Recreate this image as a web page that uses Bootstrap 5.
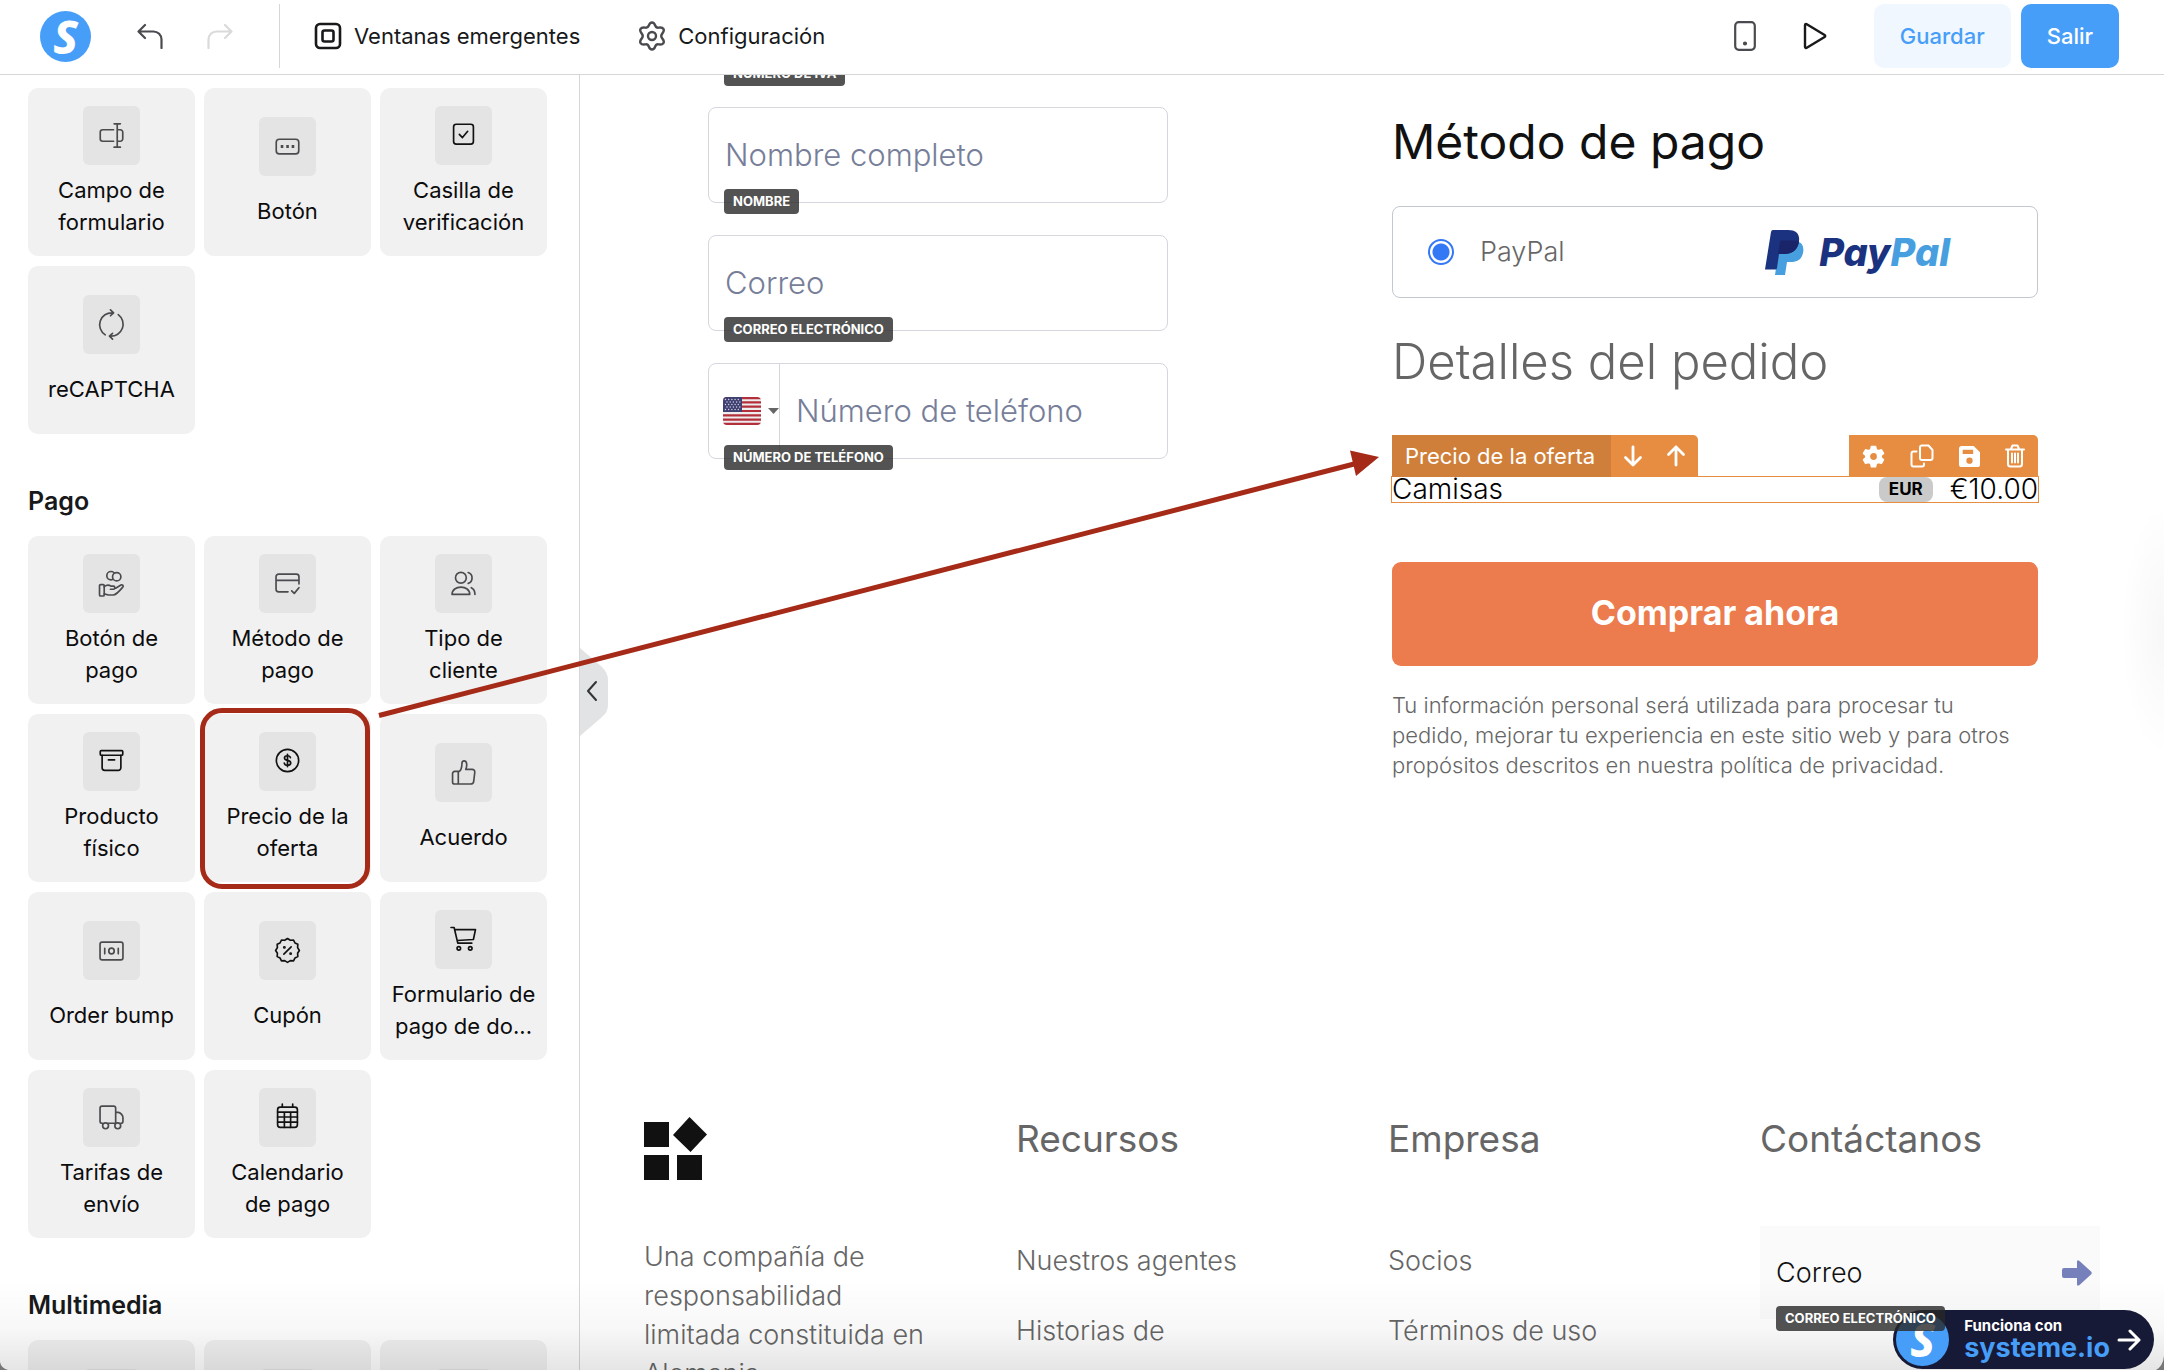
<!DOCTYPE html>
<html lang="es">
<head>
<meta charset="utf-8">
<meta name="viewport" content="width=device-width, initial-scale=1">
<title>Editor de páginas</title>
<link rel="stylesheet" href="https://cdn.jsdelivr.net/npm/bootstrap@5.3.0/dist/css/bootstrap.min.css">
<style>
body{font-family:Inter,"Liberation Sans",sans-serif;font-size:22px;line-height:32px;color:#18191b;background:#fff;height:100vh;overflow:hidden}
svg{display:block;fill:none;stroke:currentColor;stroke-linecap:round;stroke-linejoin:round;flex:none}
svg.solid{stroke:none}
button{font-family:inherit}
/* top bar */
.topbar{height:75px;border-bottom:1px solid #d5d6d8;padding:0 45px 2px 40px;font-weight:500;flex:none}
.topbar button{color:#18191b}
.plain{background:none;border:0;padding:0}
.s-logo{width:51px;height:51px;border-radius:50%;background:#479ef8;color:#fff;font:italic 800 46px/50px "Noto Sans",sans-serif;text-align:center;text-decoration:none;flex:none}
.bar-rule{width:1px;height:64px;background:#d5d6d8}
.undo-set{gap:44px;margin:0 46px}
.topbar .undo-set button{color:#4a4b4f}
.topbar .undo-set button:disabled{color:#d9dadb}
.bar-menu{gap:58px;margin-left:34px}
.bar-menu button{gap:12px}
.bar-tools{gap:47px;margin-right:47px}
.topbar .btn{height:64px;border-radius:10px;font-size:22px;font-weight:500;padding:0 26px;border:0}
.topbar .btn-save{background:#f0f7ff;color:#479ef8;margin-right:10px}
.topbar .btn-exit{background:#479ef8;color:#fff}
/* element palette */
.palette{width:580px;border-right:1px solid #d5d6d8;padding:13px 32px 0 28px;flex:none;overflow:hidden}
.palette h2{font-size:25px;line-height:32px;font-weight:600;margin:51px 0 19px}
.tiles{display:grid;grid-template-columns:repeat(3,1fr);gap:10px 9px}
.tile{height:168px;border:0;border-radius:10px;background:#f1f1f1;padding:9px 4px;display:flex;flex-direction:column;align-items:center;justify-content:space-evenly;color:#0c0c0d;position:relative}
.tile-ico{width:57px;height:59px;border-radius:6px;background:#e4e4e4;display:flex;align-items:center;justify-content:center;color:#4a4b4f}
.tile-ico.ink{color:#111}
.tile-ico svg{width:25px;height:25px;stroke-width:1.6;overflow:visible}
.picked::after{content:"";position:absolute;inset:-6px 1px -7px -4px;border:5px solid #a52b18;border-radius:22px;pointer-events:none}
/* canvas */
.canvas{overflow:hidden;position:relative}
.checkout{display:grid;grid-template-columns:460fr 646fr;column-gap:224px;padding:0 126px 0 128px}
.fields{margin-top:-96px;display:flex;flex-direction:column;gap:32px}
.field{position:relative;height:96px;border:1px solid #d5d6de;border-radius:8px;display:flex}
.field input,.mail input{border:0;background:none;width:100%;min-width:0;padding:0 16px;font-size:31px;font-weight:300;outline:0;color:#777e99}
.field input::placeholder{color:#777e99;opacity:1}
.tag{position:absolute;left:15px;bottom:-12px;z-index:3;height:25px;line-height:25px;padding:0 9px;border-radius:4px;background:rgba(40,40,40,.8);color:#fff;font-size:13px;font-weight:700;white-space:nowrap;text-transform:uppercase}
.dial{background:none;border:0;border-right:1px solid #d5d6de;width:71px;flex:none;padding:0 0 0 14px;gap:7px}
.pay-col{padding-top:37px}
.pay-col h1{font-size:48px;line-height:60px;font-weight:400;color:#111;margin:0 0 34px}
.pay-col h2{font-size:49px;line-height:60px;font-weight:300;color:#666;margin:34px 0 84px}
.method{height:92px;border:1px solid #c3c7d0;border-radius:8px;padding:0 87px 0 35px;font-size:27px;font-weight:300;color:#666}
.method .form-check-input{width:26px;height:26px;margin:0 26px 0 0;border:2px solid #3478f6;background:radial-gradient(circle,#3478f6 0 8px,#fff 9px);flex:none;float:none}
.method svg{margin-right:15px}
.brand{font-size:38px;font-weight:800;font-style:italic;line-height:44px;color:#1a3280}
.brand span{color:#479fe0}
.offer{position:relative;height:27px;border:1px solid #e68d41;margin:0 -1px;font-size:28px;line-height:25px;font-weight:300;color:#000}
.offer-tools{position:absolute;left:0;right:0;bottom:100%;height:42px;color:#fff;font-size:22px;font-weight:400}
.offer-tools>div{background:#e68d41;border-top-right-radius:5px}
.offer-tools button{color:#fff}
.offer-name{background:#d07f3a;padding:0 16px 0 13px;line-height:42px}
.offer-move{gap:23px;padding:0 12px}
.offer-acts{gap:25px;padding:0 13px}
.cur{background:#cacaca;border-radius:8px;color:#000;font-size:17px;font-weight:700;height:25px;padding:0 10px;margin-right:17px}
.cta{height:104px;width:100%;border:0;border-radius:9px;background:#ec7b4d;color:#fff;font-size:34px;font-weight:700;margin:59px 0 24px;padding:0 0 2px}
.legal{font-size:22px;line-height:30px;font-weight:300;color:#666;margin:0}
.site-foot{display:grid;grid-template-columns:repeat(4,1fr);gap:32px;padding:0 64px;margin-top:337px;color:#666;font-size:27px;font-weight:300}
.site-foot h3{font-size:37px;line-height:44px;font-weight:400;margin:0}
.site-foot p{line-height:39px;margin:56px 40px 0 0}
.foot-links{list-style:none;padding:0;margin:80px 0 0;display:grid;gap:30px;line-height:40px}
.foot-links a{color:inherit;text-decoration:none}
.mail{position:relative;height:93px;background:#fafafa;margin-top:65px;padding-right:8px}
.mail input{font-size:27px}
.mail input::placeholder{color:#111;opacity:1}
.mail .tag{left:16px}
.powered{position:absolute;right:10px;bottom:1px;z-index:2;height:59px;border-radius:30px;background:#171a36;color:#fff;padding:0 13px 0 3px;gap:15px;text-decoration:none}
.powered .s-logo{width:53px;height:53px;line-height:52px}
.powered small{display:block;font-size:15px;line-height:16px;font-weight:700}
.powered b{display:block;font-size:27px;line-height:28px;color:#479ef8;font-weight:700}
.powered svg{margin-left:-8px}
.handle{position:absolute;left:580px;top:648px;z-index:2}
.guide{position:absolute;left:370px;top:440px;z-index:4;pointer-events:none}
.shade{position:absolute;left:0;right:0;bottom:0;height:90px;z-index:1;pointer-events:none;background:linear-gradient(rgba(0,0,0,0),rgba(0,0,0,.03) 55%,rgba(0,0,0,.1))}
.glow{position:absolute;right:0;top:500px;width:44px;height:260px;pointer-events:none;background:radial-gradient(ellipse at 100% 50%,rgba(0,0,0,.03),rgba(0,0,0,0) 70%)}
.corner{position:absolute;bottom:0;z-index:5;color:#777}
.corner-l{left:0}
.corner-r{right:0}
</style>
<script src="https://cdn.jsdelivr.net/npm/bootstrap@5.3.0/dist/js/bootstrap.bundle.min.js"></script>
</head>
<body class="d-flex flex-column position-relative">

<header class="topbar d-flex align-items-center">
  <a class="s-logo" href="#" aria-label="Inicio">S</a>
  <div class="undo-set d-flex">
    <button class="plain" aria-label="Deshacer"><svg width="26" height="26" viewBox="0 0 26 26" stroke-width="2.200"><path d="M8 2 1.500 8.500 8 15M2 8.500h14.500a8 8 0 0 1 8 8V25"/></svg></button>
    <button class="plain" aria-label="Rehacer" disabled><svg width="26" height="26" viewBox="0 0 26 26" stroke-width="2.200"><path d="M18 2l6.500 6.500L18 15M24 8.500H9.500a8 8 0 0 0-8 8V25"/></svg></button>
  </div>
  <div class="bar-rule"></div>
  <nav class="bar-menu d-flex">
    <button class="plain d-flex align-items-center"><svg width="28" height="28" viewBox="0 0 28 28" stroke-width="2.600"><rect x="2" y="2" width="24" height="24" rx="4"/><rect x="8.500" y="8.500" width="11" height="11" rx="2"/></svg>Ventanas emergentes</button>
    <button class="plain d-flex align-items-center"><svg width="28" height="30" viewBox="0 0 28 30" stroke-width="2.400" color="#4a4b4f"><path d="M14 1.500c2 0 2.600 1.300 3.200 3 .6 1.600 1.800 2.400 3.500 2.100 1.900-.3 3.600-.6 4.700 1.300s.2 3.100-1 4.500c-1.300 1.500-1.300 3.700 0 5.200 1.200 1.400 2.100 2.600 1 4.500s-2.800 1.600-4.700 1.300c-1.700-.3-2.900.5-3.500 2.100-.6 1.700-1.200 3-3.200 3s-2.600-1.300-3.200-3c-.6-1.600-1.800-2.400-3.500-2.100-1.900.3-3.600.6-4.700-1.300s-.2-3.100 1-4.500c1.300-1.500 1.300-3.700 0-5.200-1.200-1.400-2.100-2.600-1-4.500s2.800-1.600 4.700-1.300c1.700.3 2.900-.5 3.500-2.100.6-1.700 1.200-3 3.200-3Z"/><circle cx="14" cy="15" r="4"/></svg>Configuración</button>
  </nav>
  <div class="bar-tools d-flex align-items-center ms-auto">
    <button class="plain" aria-label="Vista móvil"><svg width="22" height="30" viewBox="0 0 22 30" stroke-width="2.200" color="#4a4b4f"><rect x="1.200" y="1.200" width="19.600" height="27.600" rx="3.500"/><circle cx="11" cy="22.500" r="1" fill="currentColor"/></svg></button>
    <button class="plain" aria-label="Vista previa"><svg width="24" height="28" viewBox="0 0 24 28" stroke-width="2.400"><path d="M2 3.200v21.600c0 1 1 1.500 1.800 1L21.600 15c.8-.5.8-1.500 0-2L3.800 2.200C3 1.700 2 2.200 2 3.200Z"/></svg></button>
  </div>
  <button class="btn btn-save">Guardar</button>
  <button class="btn btn-exit">Salir</button>
</header>

<div class="d-flex flex-grow-1 overflow-hidden">
  <aside class="palette">
    <div class="tiles">
      <button class="tile"><span class="tile-ico"><svg viewBox="0 0 24 24"><path d="M14 6.500H3.500A2.300 2.300 0 0 0 1.200 8.800v6.400a2.300 2.300 0 0 0 2.300 2.300H14M17.500 1v22M14.500.8h6M14.500 23.200h6M18.500 6.500h2a2.300 2.300 0 0 1 2.300 2.300v6.400a2.300 2.300 0 0 1-2.300 2.300h-2"/></svg></span><span>Campo de<br>formulario</span></button>
      <button class="tile"><span class="tile-ico"><svg viewBox="0 0 24 24"><rect x="1.200" y="5" width="21.600" height="14" rx="3"/><path d="M5.500 12h2.500M10.800 12h2.500M16 12h2.500" stroke-width="2.800" stroke-linecap="butt"/></svg></span><span>Botón</span></button>
      <button class="tile"><span class="tile-ico ink"><svg viewBox="0 0 24 24"><rect x="2.500" y="1.200" width="19" height="19" rx="2.500"/><path d="m8 11 3 3 5-6"/></svg></span><span>Casilla de<br>verificación</span></button>
      <button class="tile"><span class="tile-ico"><svg viewBox="0 0 24 24"><path d="M6 22A11.500 11.500 0 0 1 13 .8M18.500 2.500A11.500 11.500 0 0 1 11 23.200M11-2l3 2.800-3 2.800M13 26l-3-2.800 3-2.700"/></svg></span><span>reCAPTCHA</span></button>
    </div>

    <h2>Pago</h2>
    <div class="tiles">
      <button class="tile"><span class="tile-ico"><svg viewBox="0 0 24 24"><circle cx="11.500" cy="4.500" r="4"/><circle cx="17" cy="5.500" r="4" fill="#e4e4e4"/><rect x="0.500" y="13" width="4.500" height="11" rx="1"/><path d="M5 15c2.500-2 4.500-2 6.500-.5H14c1.500 0 1.500 3 0 3h-3M16 16.500l5-3c1.500-.7 3 .8 1.800 2C19.500 19.500 17 22.500 14 23H9l-4-1"/></svg></span><span>Botón de<br>pago</span></button>
      <button class="tile"><span class="tile-ico"><svg viewBox="0 0 24 24"><path d="M12.500 20H3.500a2.500 2.500 0 0 1-2.500-2.500v-12A2.500 2.500 0 0 1 3.500 3h17A2.500 2.500 0 0 1 23 5.500V12.500M1 9h22M16 19l2.500 2.500 4.500-5.500"/></svg></span><span>Método de<br>pago</span></button>
      <button class="tile"><span class="tile-ico"><svg viewBox="0 0 24 24"><circle cx="9.500" cy="6.500" r="5.200"/><path d="M1 22.500C1 18 5 15.500 9.500 15.500s8.500 2.500 8.500 7zM16.500 1.500a5.500 5.500 0 0 1 0 10.400M19.500 16c2.200 1 3.500 3.500 3.500 6.500"/></svg></span><span>Tipo de<br>cliente</span></button>
      <button class="tile"><span class="tile-ico ink"><svg viewBox="0 0 24 24"><rect x="1.200" y="1.500" width="21.600" height="4.500" rx="1"/><path d="M3 6v12A2.500 2.500 0 0 0 5.500 20.500h13A2.500 2.500 0 0 0 21 18V6M9 10.500h6"/></svg></span><span>Producto<br>físico</span></button>
      <button class="tile picked"><span class="tile-ico ink"><svg viewBox="0 0 24 24"><circle cx="12" cy="11" r="10.700"/><path d="M14.800 8.300c-.3-1.200-1.400-1.800-2.800-1.800-1.700 0-2.900.8-2.900 2.100 0 3.200 6 1.500 6 4.800 0 1.400-1.300 2.200-3 2.200-1.600 0-2.900-.7-3.200-2.100M12 5v12"/></svg></span><span>Precio de la<br>oferta</span></button>
      <button class="tile"><span class="tile-ico"><svg viewBox="0 0 24 24"><path d="M7 23V11.500c3-1.500 3.500-5 3.500-8 0-3.500 4-3.500 4.500 0 .3 2-.2 4-.8 5.500h6c2 0 2.800 1.300 2.600 3l-1 8.500c-.2 1.700-1.300 2.500-3 2.500zM7 23H3.500a2 2 0 0 1-2-2V13a2 2 0 0 1 2-2H7"/></svg></span><span>Acuerdo</span></button>
      <button class="tile"><span class="tile-ico"><svg viewBox="0 0 24 24"><rect x="1" y="4" width="22" height="17" rx="2"/><path d="M5.500 9.800v5.400M18.500 9.800v5.400"/><ellipse cx="12" cy="12.500" rx="2.600" ry="2.800"/></svg></span><span>Order bump</span></button>
      <button class="tile"><span class="tile-ico ink"><svg viewBox="0 0 24 24"><path d="M12 .5l2.700 1.700 3.100-.2 1.400 2.800 2.700 1.300-.2 3.100L23.400 12l-1.700 2.700.2 3.100-2.700 1.300-1.400 2.800-3.100-.2L12 23.400l-2.700-1.700-3.100.2-1.400-2.800-2.700-1.300.2-3.100L.6 12l1.700-2.800-.2-3.100 2.700-1.300L6.200 2l3.100.2zM8.500 15.500l7-7"/><circle cx="9" cy="9" r=".6"/><circle cx="15" cy="15" r=".6"/></svg></span><span>Cupón</span></button>
      <button class="tile"><span class="tile-ico ink"><svg viewBox="0 0 24 24"><path d="M0 .5h3L6.500 15.500H20M3.500 2.500H23.500l-2 9.500L6 13"/><circle cx="7.500" cy="20.500" r="1.700"/><circle cx="18.500" cy="20.500" r="1.700"/></svg></span><span>Formulario de<br>pago de do...</span></button>
      <button class="tile"><span class="tile-ico"><svg viewBox="0 0 24 24"><path d="M3.500 17.500H3a2 2 0 0 1-2-2V3a2 2 0 0 1 2-2h11a2 2 0 0 1 2 2v14.500H9M16 7h2.500c2 0 4.500 3 4.500 5v3.500a2 2 0 0 1-2 2M16 17.500h-.5"/><circle cx="6.300" cy="20" r="2.800"/><circle cx="18" cy="20" r="2.800"/></svg></span><span>Tarifas de<br>envío</span></button>
      <button class="tile"><span class="tile-ico ink"><svg viewBox="0 0 24 24"><rect x="2.500" y="2" width="19" height="19.500" rx="2.500"/><path d="M2.500 6.800h19M2.500 11.500h19M2.500 16.500h19M9 7v14.500M15 7v14.500M7-1v3M17-1v3"/></svg></span><span>Calendario<br>de pago</span></button>
    </div>

    <h2>Multimedia</h2>
    <div class="tiles">
      <button class="tile" aria-label="Imagen"><span class="tile-ico"></span><span>&nbsp;</span></button>
      <button class="tile" aria-label="Video"><span class="tile-ico"></span><span>&nbsp;</span></button>
      <button class="tile" aria-label="Audio"><span class="tile-ico"></span><span>&nbsp;</span></button>
    </div>
  </aside>

  <main class="canvas flex-grow-1">
    <div class="checkout">
      <form class="fields">
        <div class="field"><input type="text" id="f-iva" aria-label="Número de IVA"><label class="tag" for="f-iva">Número de IVA</label></div>
        <div class="field"><input type="text" id="f-name" placeholder="Nombre completo"><label class="tag" for="f-name">Nombre</label></div>
        <div class="field"><input type="email" id="f-mail" placeholder="Correo"><label class="tag" for="f-mail">Correo electrónico</label></div>
        <div class="field">
          <button type="button" class="dial d-flex align-items-center" aria-label="País">
            <svg class="solid" width="38" height="28" viewBox="0 0 38 28"><defs><clipPath id="fl"><rect width="38" height="28" rx="4"/></clipPath></defs><g clip-path="url(#fl)"><path fill="#eee" d="M0 0h38v28H0z"/><path stroke="#b22f3b" stroke-width="2.150" stroke-linecap="butt" d="M0 1.080h38M0 5.380h38M0 9.690h38M0 14h38M0 18.300h38M0 22.600h38M0 26.900h38"/><path fill="#414073" d="M0 0h19v15H0z"/><path stroke="#d5d5e2" stroke-width="1.400" stroke-dasharray="0 3.200" d="M2.500 2.500h15M4 5h13M2.500 7.500h15M4 10h13M2.500 12.500h15"/></g></svg>
            <svg class="solid" width="11" height="6" viewBox="0 0 11 6"><path fill="#666" d="M0 0h11L5.500 6z"/></svg>
          </button>
          <input type="tel" id="f-tel" placeholder="Número de teléfono"><label class="tag" for="f-tel">Número de teléfono</label>
        </div>
      </form>

      <section class="pay-col">
        <h1>Método de pago</h1>
        <div class="method d-flex align-items-center">
          <input class="form-check-input" type="radio" name="method" id="m-paypal" checked>
          <label for="m-paypal">PayPal</label>
          <svg class="solid ms-auto" width="39" height="45" viewBox="0 0 39 45"><path fill="#479fe0" d="M15 12h19c4 2 5 6 4 11-1.500 7-6 9-12 9h-4l-2 13H10z"/><path fill="#1a3280" d="M6 2q.3-2 2-2h15c8 0 12 4 11 11-1.500 9-7 13-15 13h-5l-2 14q-.3 1.500-1.500 1.500H0z"/><path fill="#1a2468" d="M15 12q.3-1.500 2-1.500h15.500l1.500 1c-1 8.500-7 12.500-15 12.500h-6z"/></svg>
          <div class="brand">Pay<span>Pal</span></div>
        </div>
        <h2>Detalles del pedido</h2>

        <div class="offer d-flex align-items-center">
          <div class="offer-tools d-flex justify-content-between">
            <div class="d-flex align-items-center">
              <span class="offer-name">Precio de la oferta</span>
              <span class="offer-move d-flex">
                <button class="plain" aria-label="Bajar"><svg width="20" height="22" viewBox="0 0 20 22" stroke-width="2.800"><path d="M10 2v18M2.500 12.500 10 20l7.500-7.500"/></svg></button>
                <button class="plain" aria-label="Subir"><svg width="20" height="22" viewBox="0 0 20 22" stroke-width="2.800"><path d="M10 20V2M2.500 9.500 10 2l7.500 7.500"/></svg></button>
              </span>
            </div>
            <div class="offer-acts d-flex align-items-center">
              <button class="plain" aria-label="Ajustes"><svg width="23" height="23" viewBox="0 0 24 24" stroke-width="1.500"><path fill="#fff" fill-rule="evenodd" d="M9.800 1.500h4.400l.7 3.300 2.200 1.200 3.200-1 2.200 3.800-2.500 2.200v2.200l2.500 2.200-2.200 3.800-3.200-1-2.200 1.200-.7 3.300H9.800l-.7-3.300-2.200-1.200-3.200 1-2.200-3.800L4 13.200V11L1.500 8.800 3.700 5l3.200 1 2.200-1.200zM12 7.700a4.300 4.300 0 1 0 0 8.600 4.300 4.300 0 0 0 0-8.600z"/></svg></button>
              <button class="plain" aria-label="Duplicar"><svg width="24" height="24" viewBox="0 0 24 24" stroke-width="2"><path d="M12 1.500h6.500L22.500 6v8a2 2 0 0 1-2 2H12a2 2 0 0 1-2-2V3.500a2 2 0 0 1 2-2ZM6.500 7.500H3.500a2 2 0 0 0-2 2v11a2 2 0 0 0 2 2H12a2 2 0 0 0 2-2v-1"/></svg></button>
              <button class="plain" aria-label="Guardar elemento"><svg class="solid" width="21" height="21" viewBox="0 0 20 20"><path fill="#fff" fill-rule="evenodd" d="M2.500 0H14l6 6v11.500a2.500 2.500 0 0 1-2.500 2.500h-15A2.500 2.500 0 0 1 0 17.500v-15A2.500 2.500 0 0 1 2.500 0ZM3.500 3.500v4h10v-4ZM10 11a3 3 0 1 0 0 6 3 3 0 0 0 0-6Z"/></svg></button>
              <button class="plain" aria-label="Eliminar"><svg width="20" height="24" viewBox="0 0 20 24" stroke-width="2"><path d="M1 5.500h18M3 5.500v14.500a2.500 2.500 0 0 0 2.500 2.500h9a2.500 2.500 0 0 0 2.500-2.500V5.500M6 5l1.500-3.500h5L14 5M7 9.500v9M10 9.500v9M13 9.500v9"/></svg></button>
            </div>
          </div>
          <span>Camisas</span>
          <span class="cur ms-auto">EUR</span>
          <span>€10.00</span>
        </div>

        <button class="cta">Comprar ahora</button>
        <p class="legal">Tu información personal será utilizada para procesar tu<br>pedido, mejorar tu experiencia en este sitio web y para otros<br>propósitos descritos en nuestra política de privacidad.</p>
      </section>
    </div>

    <footer class="site-foot">
      <div>
        <svg class="solid" width="64" height="64" viewBox="0 0 64 64"><path fill="#111" d="M0 5h25v25H0zM0 38h25v25H0zM33 38h25v25H33zM45.500 0 63 17.500 46.500 35 29 18z"/></svg>
        <p>Una compañía de responsabilidad limitada constituida en Alemania</p>
      </div>
      <div>
        <h3>Recursos</h3>
        <ul class="foot-links"><li><a href="#">Nuestros agentes</a></li><li><a href="#">Historias de</a></li></ul>
      </div>
      <div>
        <h3>Empresa</h3>
        <ul class="foot-links"><li><a href="#">Socios</a></li><li><a href="#">Términos de uso</a></li></ul>
      </div>
      <div>
        <h3>Contáctanos</h3>
        <form class="mail d-flex align-items-center">
          <input type="email" id="n-mail" placeholder="Correo"><label class="tag" for="n-mail">Correo electrónico</label>
          <button type="button" class="plain" aria-label="Enviar"><svg class="solid" width="30" height="26" viewBox="0 0 30 26"><path fill="#7681bb" d="M2 8h13V2q0-3 2.500-1L29 11.500q1.500 1.500 0 3L17.500 25q-2.500 2-2.500-1v-6H2q-2 0-2-2v-6q0-2 2-2z"/></svg></button>
        </form>
      </div>
    </footer>

    <a class="powered d-flex align-items-center" href="#">
      <span class="s-logo">S</span>
      <span><small>Funciona con</small><b>systeme.io</b></span>
      <svg width="24" height="24" viewBox="0 0 24 24" stroke-width="3"><path d="M2 12h20M13 3l9 9-9 9"/></svg>
    </a>
  </main>
</div>

<button class="plain handle" aria-label="Contraer panel"><svg class="solid" width="28" height="88" viewBox="0 0 28 88"><path fill="#e2e3e5" d="M0 0l22 19q6 6 6 13v25q0 7-6 12L0 88z"/><path stroke="#333" stroke-width="2" d="m16 34-8 9 8 9"/></svg></button>
<svg class="guide solid" width="1012" height="280" viewBox="0 0 1012 280"><path stroke="#a52b18" stroke-width="5" stroke-linecap="butt" d="M9 275.500 988 23"/><path fill="#a52b18" d="M1009 17 980 10.500 986 36z"/></svg>
<div class="glow"></div>
<div class="shade"></div>
<svg class="corner corner-l solid" width="8" height="8" viewBox="0 0 8 8"><path d="M0 0q1 6 8 8H0z" fill="currentColor"/></svg>
<svg class="corner corner-r solid" width="8" height="14" viewBox="0 0 8 14"><path d="M8 0Q7 10 0 14h8z" fill="currentColor"/></svg>
</body>
</html>
